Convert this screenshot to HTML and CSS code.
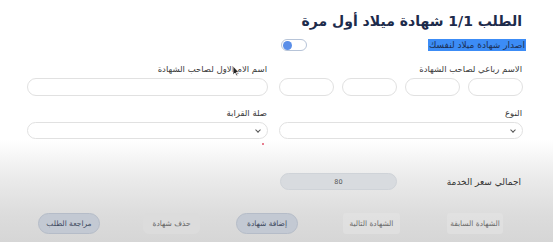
FILE: index.html
```html
<!DOCTYPE html>
<html lang="ar" dir="rtl">
<head>
<meta charset="utf-8">
<link rel="stylesheet" href="styles.css">
</head>
<body>
<div class="page">
  <h1 class="title">الطلب 1/1 شهادة ميلاد أول مرة</h1>
  <div class="grid">
    <div class="col self-row">
      <span class="selected">اصدار شهادة ميلاد لنفسك</span>
      <span class="toggle"><span class="knob"></span></span>
    </div>
    <div class="col"></div>

    <div class="col">
      <label class="lbl">الاسم رباعي لصاحب الشهادة</label>
      <div class="quad">
        <input class="field" type="text">
        <input class="field" type="text">
        <input class="field" type="text">
        <input class="field" type="text">
      </div>
    </div>
    <div class="col">
      <label class="lbl">اسم الام الاول لصاحب الشهادة</label>
      <input class="field" type="text">
      <svg class="cursor" width="8" height="12" viewBox="0 0 8 12"><path d="M1 1 L1 10 L3 8 L4.6 11 L5.8 10.4 L4.3 7.5 L7 7.5 Z" fill="#222" stroke="#fff" stroke-width="0.8"/></svg>
    </div>

    <div class="col">
      <label class="lbl">النوع</label>
      <div class="select"><span class="chev"></span></div>
    </div>
    <div class="col">
      <label class="lbl">صلة القرابة</label>
      <div class="select"><span class="chev"></span></div>
      <span class="req"></span>
    </div>

    <div class="col price-row">
      <span class="price-lbl">اجمالي سعر الخدمة</span>
      <span class="price">80</span>
    </div>
    <div class="col"></div>
  </div>

  <div class="actions">
    <button class="btn ghost b1">الشهادة السابقة</button>
    <button class="btn ghost b2">الشهادة التالية</button>
    <button class="btn solid b3">إضافة شهادة</button>
    <button class="btn light b4">حذف شهادة</button>
    <button class="btn solid b5">مراجعة الطلب</button>
  </div>
</div>
</body>
</html>
```
FILE: styles.css
```css
html, body {
  margin: 0;
  height: 100%;
}
body {
  font-family: "DejaVu Sans", "Noto Sans", sans-serif;
  background: linear-gradient(to bottom, #ffffff 0px, #ffffff 140px, #ececec 175px, #dcdcdc 215px, #d6d6d6 242px);
  color: #333;
  overflow: hidden;
}
.page {
  padding: 12px 30px 0 27px;
}
.title {
  margin: 0;
  font-size: 14px;
  font-weight: bold;
  color: #1d2b4b;
  line-height: 18px;
  padding-right: 1px;
}
.grid {
  display: grid;
  grid-template-columns: 244px 241px;
  column-gap: 11px;
}
.col {
  position: relative;
  display: flex;
  flex-direction: column;
  align-items: stretch;
}
.self-row {
  flex-direction: row;
  justify-content: space-between;
  align-items: center;
  margin-top: 8px;
  height: 14px;
  margin-right: -3px;
}
.selected {
  background: #3c8cf6;
  color: #1b2f55;
  font-size: 9px;
  line-height: 12px;
  padding: 0 1px;
}
.toggle {
  width: 22px;
  height: 10px;
  border: 1px solid #b7c4d8;
  border-radius: 7px;
  background: #fff;
  display: flex;
  align-items: center;
  justify-content: flex-end;
  padding: 0 1px;
  margin-left: 2px;
}
.knob {
  width: 9px;
  height: 9px;
  border-radius: 50%;
  background: #5a8ee8;
}
.lbl {
  font-size: 8.5px;
  color: #3a3a3a;
  line-height: 12px;
  margin-top: 11px;
  margin-bottom: 3px;
  padding-right: 1px;
}
.quad {
  display: flex;
  gap: 8px;
}
.field {
  box-sizing: border-box;
  height: 18px;
  border: 1px solid #e1e1e1;
  border-radius: 9px;
  background: #fff;
  margin: 0;
  padding: 0;
  width: 100%;
  min-width: 0;
  flex: 1;
}
.quad .field {
  flex: 0 0 55px;
  width: 55px;
}
.cursor {
  position: absolute;
  left: 205px;
  top: 13px;
}
.select {
  box-sizing: border-box;
  height: 17px;
  border: 1px solid #e1e1e1;
  border-radius: 9px;
  background: #fff;
  position: relative;
  display: flex;
  align-items: center;
  padding-right: 7px;
}
.chev {
  width: 3px;
  height: 3px;
  border-right: 1px solid #555;
  border-bottom: 1px solid #555;
  transform: rotate(45deg);
  margin-top: -2px;
}
.req {
  position: absolute;
  right: 4px;
  bottom: -6px;
  width: 2px;
  height: 2px;
  border-radius: 50%;
  background: #e0536a;
}
.price-row {
  flex-direction: row;
  justify-content: space-between;
  align-items: center;
  margin-top: 34px;
  height: 17px;
}
.price-lbl {
  font-size: 9px;
  color: #333;
  padding-right: 2px;
}
.price {
  box-sizing: border-box;
  width: 117px;
  height: 17px;
  border: 1px solid #cfd3d8;
  border-radius: 9px;
  background: #d8dbdf;
  font-size: 6.5px;
  color: #555;
  display: flex;
  align-items: center;
  justify-content: center;
  margin-left: 1px;
}
.actions {
  display: flex;
  padding-right: 20px;
  margin-top: 23px;
}
.btn {
  font-family: inherit;
  font-size: 7.5px;
  height: 21px;
  border-radius: 11px;
  padding: 0;
  margin: 0;
  color: #555;
  border: none;
  background: transparent;
}
.b1 { width: 56px; }
.b2 { width: 57px; margin-right: 47px; }
.b3 { width: 62px; margin-right: 45px; }
.b4 { width: 57px; margin-right: 36px; }
.b5 { width: 62px; margin-right: 43px; }
.ghost {
  color: #6d6d6d;
  background: rgba(230,230,230,0.5);
  border-radius: 3px;
}
.solid {
  background: #c3c9d3;
  border: 1px solid #b5bcc8;
  color: #3e4a60;
}
.light {
  background: #dcdcdc;
  color: #666;
  border-radius: 6px;
}
```
